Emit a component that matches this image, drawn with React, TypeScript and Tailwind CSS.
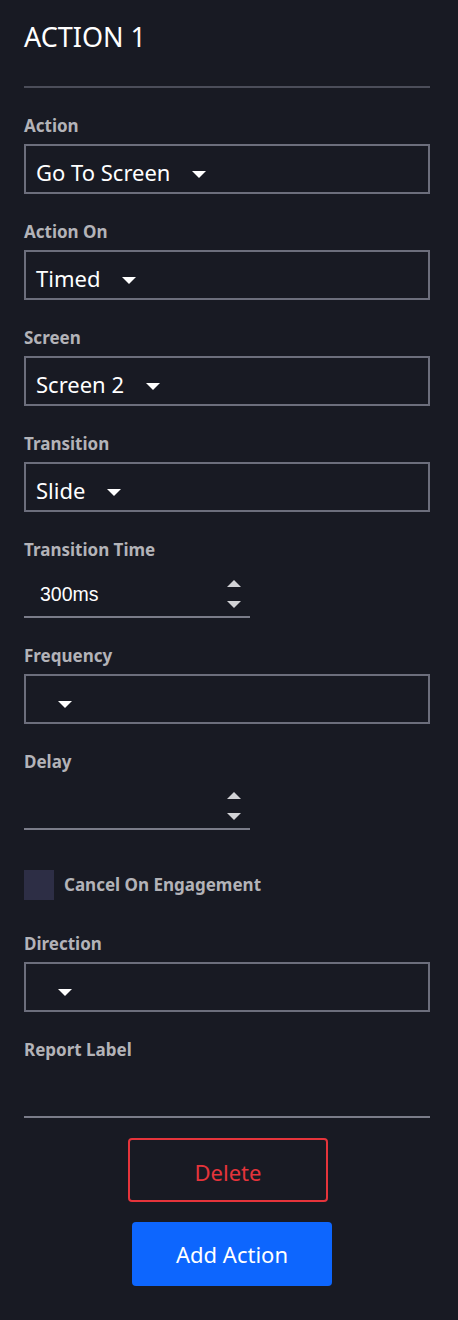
import React from "react";

const Caret = ({ className = "" }: { className?: string }) => (
  <svg width="14" height="7" viewBox="0 0 14 7" className={className}>
    <polygon points="0,0 14,0 7,7" fill="#ffffff" />
  </svg>
);

const Label = ({ children }: { children: React.ReactNode }) => (
  <div className="h-[20px] text-[17px] leading-[20px] font-bold text-[#b3b3b8]">{children}</div>
);

const Select = ({ value }: { value?: string }) => (
  <div className="mt-[8px] box-border h-[50px] border-2 border-[#6c6e7c] pt-[5px] pl-[10px] flex items-center">
    {value ? <span className="text-[22px] leading-[30px] text-white">{value}</span> : null}
    <Caret className="ml-[22px] mt-[5px]" />
  </div>
);

const NumberInput = ({ value }: { value?: string }) => (
  <div className="mt-[8px] box-border h-[50px] w-[226px] border-b-2 border-[#7a7c89] flex justify-between pl-[16px] pr-[9px]">
    <span
      className="pt-[14px] text-[19.5px] leading-[24px] text-white"
      style={{ fontFamily: '"Liberation Sans", Arial, sans-serif' }}
    >
      {value}
    </span>
    <div className="flex flex-col mt-[12px] gap-[14px]">
      <svg width="14" height="7" viewBox="0 0 14 7">
        <polygon points="7,0 14,7 0,7" fill="#d2d2d6" />
      </svg>
      <svg width="14" height="7" viewBox="0 0 14 7">
        <polygon points="0,0 14,0 7,7" fill="#d2d2d6" />
      </svg>
    </div>
  </div>
);

export default function App() {
  return (
    <div
      className="min-h-[1320px] w-[458px] bg-[#181a23] pl-[24px] pr-[28px]"
      style={{ fontFamily: '"Noto Sans", "Open Sans", sans-serif' }}
    >
      <div className="pt-[21px] h-[53px] text-[27px] leading-[32px] text-white">ACTION 1</div>
      <div className="mt-[33px] border-t-2 border-[#4b4d59]" />

      <div className="mt-[28px]">
        <Label>Action</Label>
        <Select value="Go To Screen" />
      </div>
      <div className="mt-[28px]">
        <Label>Action On</Label>
        <Select value="Timed" />
      </div>
      <div className="mt-[28px]">
        <Label>Screen</Label>
        <Select value="Screen 2" />
      </div>
      <div className="mt-[28px]">
        <Label>Transition</Label>
        <Select value="Slide" />
      </div>
      <div className="mt-[28px]">
        <Label>Transition Time</Label>
        <NumberInput value="300ms" />
      </div>
      <div className="mt-[28px]">
        <Label>Frequency</Label>
        <Select />
      </div>
      <div className="mt-[28px]">
        <Label>Delay</Label>
        <NumberInput />
      </div>

      <div className="mt-[40px] flex items-center gap-[10px]">
        <div className="h-[30px] w-[30px] bg-[#2d2e45]" />
        <span className="text-[17px] leading-[20px] font-bold text-[#b3b3b8]">Cancel On Engagement</span>
      </div>

      <div className="mt-[34px]">
        <Label>Direction</Label>
        <Select />
      </div>
      <div className="mt-[28px]">
        <Label>Report Label</Label>
        <div className="mt-[8px] h-[50px] border-b-2 border-[#7a7c89]" />
      </div>

      <div className="mt-[20px] flex flex-col items-start">
        <button className="ml-[104px] box-border h-[64px] w-[200px] rounded-[4px] border-2 border-[#e5343b] pt-[5px] text-[22px] text-[#e5343b] flex items-center justify-center">
          Delete
        </button>
        <button className="mt-[20px] ml-[108px] h-[64px] w-[200px] rounded-[4px] bg-[#0d66fe] pt-[1px] text-[22px] text-white flex items-center justify-center">
          Add Action
        </button>
      </div>
    </div>
  );
}
